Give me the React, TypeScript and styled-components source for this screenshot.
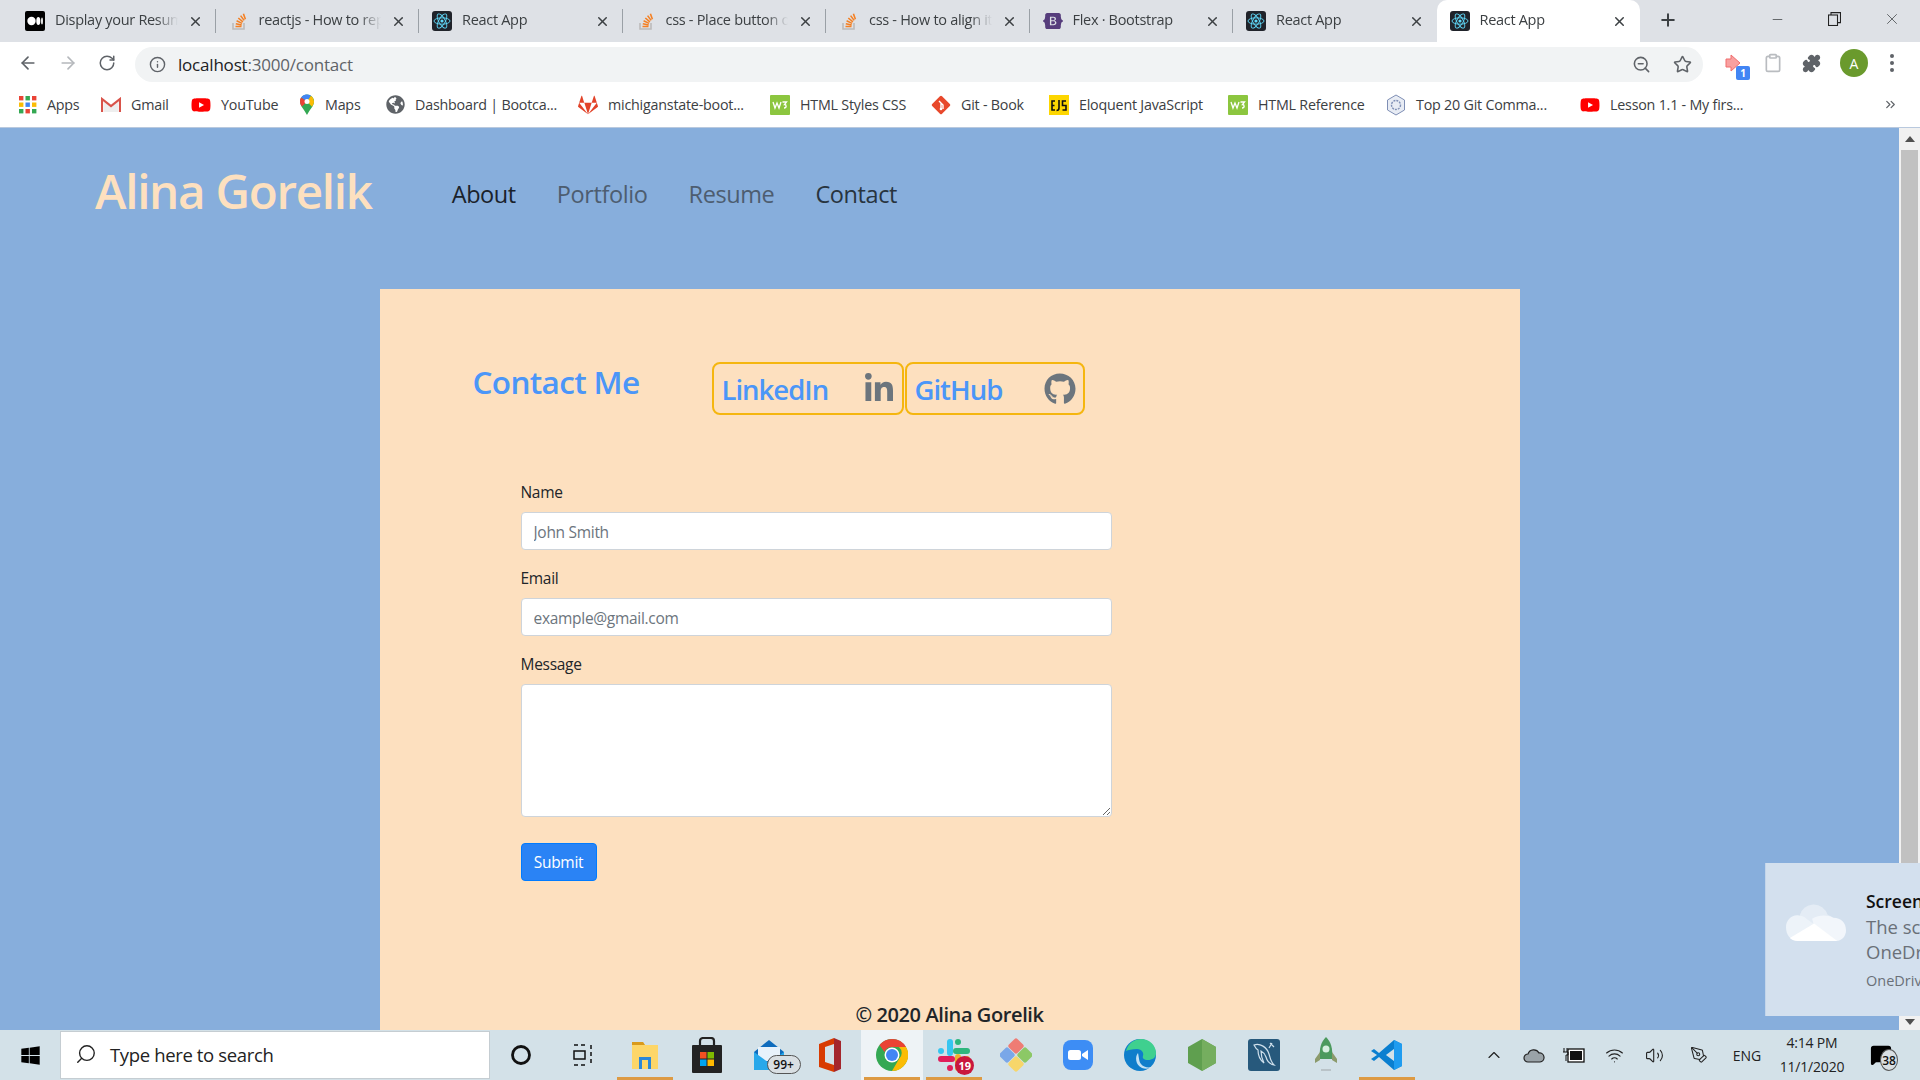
import React from "react";
import styled, { createGlobalStyle } from "styled-components";
import {
  ArrowLeft, ArrowRight, RotateCw, Info, ZoomOut, Star, Puzzle, Plus, X, Minus, Search, ChevronUp,
  Wifi, Volume2, PenTool, MessageSquare, ChevronsRight, Clipboard,
} from "lucide-react";
import { FaLinkedinIn, FaGithub, FaWindows, FaYoutube, FaGitlab, FaGlobeAmericas } from "react-icons/fa";
import { SiBootstrap } from "react-icons/si";

const Global = createGlobalStyle`
  html, body { margin: 0; padding: 0; overflow: hidden; background: #fff; }
  * { box-sizing: border-box; }
  body { font-family: "Open Sans", "Liberation Sans", sans-serif; }
`;

const Screen = styled.div`
  width: 1920px; height: 1080px; display: flex; flex-direction: column; overflow: hidden;
`;
const TabStrip = styled.div`
  height: 42px; background: #dee1e6; display: flex; align-items: flex-end; padding-left: 12px; flex: none;
`;
const Tab = styled.div<{ $active?: boolean; $sep?: boolean }>`
  width: 203.5px; height: ${p => (p.$active ? 42 : 24)}px; margin-bottom: ${p => (p.$active ? 0 : 9)}px;
  display: flex; align-items: center; padding: 0 12px 0 13px;
  background: ${p => (p.$active ? "#fff" : "transparent")};
  border-radius: ${p => (p.$active ? "10px 10px 0 0" : "0")};
  border-right: ${p => (p.$sep ? "1px solid #9aa0a6" : "1px solid transparent")};
  gap: 10px;
`;
const TabTitle = styled.span`
  flex: 1; font-size: 14.5px; line-height: 22px; padding-bottom: 2px; color: #3c4043; white-space: nowrap; overflow: hidden; letter-spacing: -0.3px;
  -webkit-mask-image: linear-gradient(90deg, #000 82%, transparent 100%);
`;
const TabClose = styled(X)`
  flex: none; color: #3c4043;
`;
const NewTab = styled.div`
  width: 56px; height: 42px; display: flex; align-items: center; justify-content: center; color: #3c4043; padding-bottom: 2px;
`;
const WinButtons = styled.div`
  margin-left: auto; display: flex; align-self: stretch; color: #3c4043;
`;
const WinButton = styled.div`
  width: 57px; display: flex; align-items: center; justify-content: center; padding-bottom: 4px;
`;
const Toolbar = styled.div`
  height: 42px; background: #fff; display: flex; align-items: center; flex: none; padding-left: 18px;
`;
const NavIcon = styled.div<{ $faded?: boolean }>`
  width: 40px; display: flex; justify-content: flex-start; color: ${p => (p.$faded ? "#b5b8bc" : "#5f6368")};
`;
const AddressBar = styled.div`
  width: 1568px; margin-left: -3px; height: 35px; border-radius: 18px; background: #f1f3f4;
  display: flex; align-items: center; padding: 0 11px 0 14px; color: #5f6368; margin-top: 3px;
`;
const Url = styled.span`
  font-size: 17px; color: #202124; margin-left: 12px; letter-spacing: -0.2px;
  span { color: #5f6368; }
`;
const AddressRight = styled.div`
  margin-left: auto; display: flex; gap: 22px; align-items: center;
`;
const ExtIcons = styled.div`
  display: flex; align-items: center; margin-left: 21px; gap: 19px;
`;
const ExtBadgeWrap = styled.div`
  position: relative; width: 20px; height: 22px;
`;
const ExtBadge = styled.span`
  position: absolute; right: -6px; bottom: -6px; width: 14px; height: 14px; background: #4285f4; color: #fff;
  font-size: 10px; font-weight: 700; display: flex; align-items: center; justify-content: center; border-radius: 2px;
`;
const Avatar = styled.div`
  width: 28px; height: 28px; border-radius: 50%; background: #6a9a2d; color: #fff; font-size: 14px;
  display: flex; align-items: center; justify-content: center;
`;
const Dots = styled.div`
  display: flex; flex-direction: column; gap: 3px; margin-left: 3px;
  i { width: 4px; height: 4px; border-radius: 50%; background: #5f6368; display: block; }
`;
const Bookmarks = styled.div`
  height: 44px; background: #fff; display: flex; align-items: center; padding: 0 0 2px 19px; flex: none;
  border-bottom: 1px solid #b9c9de;
`;
const Bookmark = styled.div<{ $w: number }>`
  width: ${p => p.$w}px; display: flex; align-items: center; gap: 10px; flex: none; overflow: hidden;
  font-size: 14.3px; color: #3c4043; white-space: nowrap; letter-spacing: -0.22px;
  svg { flex: none; }
`;
const More = styled.div`
  margin-left: auto; margin-right: 22px; color: #5f6368; display: flex;
`;
const Viewport = styled.div`
  flex: 1; min-height: 0; display: flex; position: relative; overflow: hidden;
`;
const Page = styled.main`
  flex: 1; background: #87aedc; display: flex; flex-direction: column; overflow: hidden;
`;
const Header = styled.header`
  height: 161px; flex: none; display: flex; align-items: flex-start; padding: 32px 0 0 95px;
`;
const Brand = styled.a`
  font-size: 47.6px; font-weight: 600; color: #fde0bf; line-height: 62px; letter-spacing: -1.3px; margin-right: 80px;
`;
const NavLinks = styled.nav`
  display: flex; gap: 41px; height: 62px; align-items: center; margin-top: 3px;
`;
const NavLink = styled.a<{ $tone: string }>`
  font-size: 23.5px; color: ${p => p.$tone}; letter-spacing: -0.4px;
`;
const Card = styled.section`
  width: 1140px; margin: 0 auto; flex: 1; background: #fde0bf; padding: 73px 0 0;
  display: flex; flex-direction: column;
`;
const TitleRow = styled.div`
  display: flex; align-items: flex-start; padding-left: 93px; height: 53px; flex: none;
`;
const Title = styled.h1`
  margin: 0; width: 239px; font-size: 31.5px; line-height: 40px; font-weight: 600; color: #4b96f8; letter-spacing: -0.65px;
`;
const SocialButton = styled.a<{ $w: number }>`
  width: ${p => p.$w}px; height: 53px; border: 2px solid #f5b60f; border-radius: 8px; display: flex; align-items: center;
  justify-content: space-between; padding: 2px 7px 0 8px; font-size: 27.5px; font-weight: 600; color: #4b96f8;
  letter-spacing: -1px; margin-right: 1px;
  svg { color: #6c757d; margin-top: -2px; }
`;
const Form = styled.form`
  margin: 65px 0 0 141px; width: 591px; flex: none; display: flex; flex-direction: column;
`;
const Label = styled.label`
  font-size: 15.5px; line-height: 24px; color: #212529; margin-bottom: 8px; display: block; letter-spacing: -0.3px;
`;
const Group = styled.div`
  margin-bottom: 16px; display: flex; flex-direction: column;
`;
const Input = styled.input`
  height: 38px; border: 1px solid #ced4da; border-radius: 4px; background: #fff; padding: 2px 12px 0;
  font: 15.5px "Open Sans", sans-serif; letter-spacing: -0.3px; outline: none;
  &::placeholder { color: #6c757d; opacity: 1; }
`;
const TextArea = styled.textarea`
  height: 133px; border: 1px solid #ced4da; border-radius: 4px; background: #fff; outline: none; display: block;
`;
const Submit = styled.button`
  width: 76px; height: 38px; margin-top: 10px; border: 1px solid #007bff; border-radius: 4px; background: #2a83f5; color: #fff;
  font: 15.5px "Open Sans", sans-serif; letter-spacing: -0.3px; padding: 0;
`;
const Footer = styled.footer`
  margin-top: 119px; text-align: center; font-size: 20px; line-height: 30px; font-weight: 600; color: #212529; letter-spacing: -0.4px;
`;
const Scrollbar = styled.div`
  width: 21px; flex: none; background: #f1f1f1; display: flex; flex-direction: column; align-items: center; padding-top: 8px;
`;
const ScrollUp = styled.i`
  width: 0; height: 0; border: 5px solid transparent; border-bottom: 6px solid #505050; border-top: 0; display: block;
`;
const ScrollThumb = styled.div`
  width: 17px; height: 720px; background: #c1c1c1; margin-top: 8px;
`;
const ScrollDown = styled.i`
  margin-top: auto; margin-bottom: 5px; width: 0; height: 0; border: 5px solid transparent; border-top: 6px solid #505050; border-bottom: 0; display: block;
`;
const Toast = styled.aside`
  position: absolute; left: 1765px; top: 735px; width: 155px; height: 153px; background: #d3e0ee;
  display: flex; padding: 26px 0 0 20px; overflow: hidden; white-space: nowrap; border-left: 1px solid #c3d5ea;
`;
const ToastCloud = styled.div`
  flex: none; width: 60px; height: 40px; margin-top: 14px; display: flex;
`;
const ToastText = styled.div`
  margin-left: 20px; flex: none; display: flex; flex-direction: column; font-size: 18.5px; line-height: 25px; color: #6a7078;
  strong { color: #111; font-size: 17.5px; font-weight: 600; }
  small { font-size: 14.500px; margin-top: 5px; line-height: 24px; }
`;
const Taskbar = styled.footer`
  height: 50px; flex: none; background: #d3e1e8; display: flex; align-items: center; position: relative;
`;
const StartBtn = styled.div`
  width: 60px; display: flex; align-items: center; justify-content: center; color: #000;
`;
const SearchBox = styled.div`
  width: 430px; height: 48px; background: #fff; border: 1px solid #c5cdd2; display: flex; align-items: center; padding: 0 0 2px 14px;
  font-size: 18.5px; color: #222; gap: 13px; letter-spacing: -0.36px;
`;
const TaskItem = styled.div<{ $on?: boolean; $bar?: boolean }>`
  width: 61.9px; height: 50px; flex: none; display: flex; align-items: center; justify-content: center; position: relative;
  background: ${p => (p.$on ? "#eef3f6" : "transparent")};
  &::after {
    content: ""; position: absolute; left: 3px; right: 3px; bottom: 0; height: 3px;
    background: ${p => (p.$bar ? "#dd9a43" : "transparent")};
  }
`;
const Count = styled.span`
  position: absolute; left: 29px; bottom: 6px; min-width: 34px; height: 19px; border-radius: 10px; background: #d9dfe3;
  border: 1px solid #555; font-size: 12px; font-weight: 600; color: #111; display: flex; align-items: center; justify-content: center;
`;
const RedBadge = styled.span`
  position: absolute; left: 32px; bottom: 5px; width: 19px; height: 19px; border-radius: 50%; background: #c9173d; color: #fff;
  font-size: 11px; font-weight: 700; display: flex; align-items: center; justify-content: center;
`;
const Tray = styled.div`
  margin-left: auto; display: flex; align-items: center; height: 50px; color: #222; padding-right: 10px;
`;
const TrayIcon = styled.div<{ $w?: number }>`
  width: ${p => p.$w ?? 40}px; display: flex; justify-content: center; align-items: center; font-size: 14px;
`;
const Clock = styled.div`
  width: 84px; display: flex; flex-direction: column; align-items: center; font-size: 14px; line-height: 24px; color: #222; letter-spacing: -0.2px;
`;
const NotifWrap = styled.div`
  position: relative; margin-left: 16px; width: 40px; display: flex; justify-content: flex-start; align-items: center;
`;
const NotifCount = styled.span`
  position: absolute; left: 10px; top: 5px; width: 18px; height: 22px; border-radius: 50%; background: #d9dfe3;
  border: 1px solid #555; font-size: 12px; font-weight: 600; color: #111; display: flex; align-items: center; justify-content: center;
`;

const Medium = () => (
  <svg width="20" height="20" viewBox="0 0 20 20"><rect width="20" height="20" rx="2" fill="#000"/><circle cx="6.5" cy="10" r="4.2" fill="#fff"/><ellipse cx="13.3" cy="10" rx="2" ry="4" fill="#fff"/><ellipse cx="17" cy="10" rx=".9" ry="3.6" fill="#fff"/></svg>
);
const StackO = () => (
  <svg width="20" height="20" viewBox="0 0 20 20"><path d="M4 12v6h11v-6" fill="none" stroke="#bcbbbb" strokeWidth="1.6"/><path d="M6.5 15.5h6M6.8 12.8l5.9 1.2M7.6 9.8l5.5 2.6M9.3 7l4.6 3.9M11.6 4.6l3.5 4.8M14.4 2.8l2 5.5" stroke="#f48024" strokeWidth="1.6" fill="none"/></svg>
);
const ReactFav = () => (
  <svg width="20" height="20" viewBox="0 0 20 20"><rect width="20" height="20" rx="3" fill="#20232a"/><g fill="none" stroke="#61dafb" strokeWidth=".9"><ellipse cx="10" cy="10" rx="8" ry="3.2"/><ellipse cx="10" cy="10" rx="8" ry="3.2" transform="rotate(60 10 10)"/><ellipse cx="10" cy="10" rx="8" ry="3.2" transform="rotate(120 10 10)"/></g><circle cx="10" cy="10" r="1.6" fill="#61dafb"/></svg>
);
const RestoreIcon = () => (
  <svg width="13" height="14" viewBox="0 0 13 14" fill="none" stroke="#222" strokeWidth="1.1"><rect x=".5" y="3" width="9" height="10.500"/><path d="M3 3V.6h9.500v10H9.500"/></svg>
);
const AppsGrid = () => (
  <svg width="18" height="18" viewBox="0 0 18 18">
    {[0, 1, 2].flatMap(r => [0, 1, 2].map(c => (
      <rect key={`${r}${c}`} x={c * 6.5} y={r * 6.5} width="4.4" height="4.4" fill={["#ea4335", "#fbbc05", "#34a853", "#4285f4"][(r + c * 2) % 4]} />
    )))}
  </svg>
);
const GmailIcon = () => (
  <svg width="20" height="16" viewBox="0 0 20 16"><path d="M3 3l7 6 7-6v12H3z" fill="#eee"/><path d="M1 15V2l9 7 9-7v13" fill="none" stroke="#d9534a" strokeWidth="2.2"/></svg>
);
const MapsIcon = () => (
  <svg width="16" height="22" viewBox="0 0 16 22"><path d="M8 21C5 15 1 12 1 7.500a7 7 0 0 1 14 0C15 12 11 15 8 21z" fill="#34a853"/><path d="M2 3.500A7 7 0 0 1 12 1.800L8 7.500z" fill="#4285f4"/><path d="M12 1.800A7 7 0 0 1 15 7.500c0 2-1 3.800-2 5.300L8 7.500z" fill="#fbbc05"/><path d="M2 3.500L8 7.500 3 12.500C1.800 11 1 9.500 1 7.500c0-1.500.4-2.900 1-4z" fill="#ea4335"/><circle cx="8" cy="7.500" r="2.500" fill="#fff"/></svg>
);
const W3Icon = () => (
  <svg width="20" height="20" viewBox="0 0 20 20"><rect width="20" height="20" rx="1" fill="#8cc63f"/><path d="M3 7l2 6 2-5 2 5 2-6M12.500 7h4l-2 2.500c2 0 2.500 3.500-.5 3.500" fill="none" stroke="#fff" strokeWidth="1.300"/></svg>
);
const GitIcon = () => (
  <svg width="20" height="20" viewBox="0 0 20 20"><rect x="3" y="3" width="14" height="14" rx="1.500" transform="rotate(45 10 10)" fill="#e8482b"/><path d="M8 6l4 4v4M10 8v6" stroke="#fff" strokeWidth="1.400" fill="none"/><circle cx="10" cy="14" r="1.300" fill="#fff"/></svg>
);
const EjsIcon = () => (
  <svg width="20" height="20" viewBox="0 0 20 20"><rect width="20" height="20" fill="#fdd600"/><path d="M6 6H3v9h3M3 10.500h2.500M10 5v8c0 2-1 2.500-2.500 2.500M17 6h-3.500v4.500H17V15h-3.500" fill="none" stroke="#111" strokeWidth="1.600"/></svg>
);
const HexIcon = () => (
  <svg width="20" height="22" viewBox="0 0 20 22"><path d="M10 1l8.500 5v10L10 21l-8.500-5V6z" fill="#e8ecf4" stroke="#7f8fb5" strokeWidth="1"/><circle cx="10" cy="11" r="4.500" fill="none" stroke="#7f8fb5" strokeWidth="1.400" strokeDasharray="2 1"/></svg>
);
const ExtArrow = () => (
  <svg width="20" height="22" viewBox="0 0 20 22"><path d="M2 7h5V3l9 8-9 8v-4H2z" fill="#f8a0a0" stroke="#f06c6c" strokeWidth="1"/></svg>
);
const CloudToast = () => (
  <svg width="60" height="39" viewBox="0 0 62 40"><path d="M14 13a15 15 0 0 1 29-1 12 12 0 0 1 6 4L22 25z" fill="#e4ecf5"/><path d="M0 25c0-8 7-14 14-12 3 0 6 1.500 8 4l9 6-19 16C5 39 0 33 0 25z" fill="#edf3f9"/><path d="M27 16c7-4 16-4 22-1 8 0 13 5 13 13 0 6-4 11-10 11l-22-12z" fill="#f2f6fb"/><path d="M4 36l25-15 24 18H12c-3 0-6-1-8-3z" fill="#fff"/></svg>
);
const WinExplorer = () => (
  <svg width="26" height="30" viewBox="0 0 26 30"><path d="M0 2h11l2 3h13v24H0z" fill="#fdd668"/><path d="M0 2h11l2 3H0z" fill="#d99a1c"/><path d="M7 17h12v12h-3v-9h-6v9H7z" fill="#2b87d8"/></svg>
);
const StoreIcon = () => (
  <svg width="30" height="36" viewBox="0 0 30 36"><path d="M8 9V4a3 3 0 0 1 3-3h8a3 3 0 0 1 3 3v5" fill="none" stroke="#222" strokeWidth="2.200"/><rect y="8" width="30" height="28" rx="1" fill="#232323"/><rect x="8" y="15" width="6.500" height="6.500" fill="#f25022"/><rect x="15.500" y="15" width="6.500" height="6.500" fill="#7fba00"/><rect x="8" y="22.500" width="6.500" height="6.500" fill="#00a4ef"/><rect x="15.500" y="22.500" width="6.500" height="6.500" fill="#ffb900"/></svg>
);
const MailIcon = () => (
  <svg width="32" height="32" viewBox="0 0 32 32"><path d="M1 13L16 1l15 12v18H1z" fill="#0f6cbd"/><path d="M5 8h22v14H5z" fill="#e8f2fb"/><path d="M1 13l15 11 15-11v18H1z" fill="#28a8ea"/></svg>
);
const OfficeIcon = () => (
  <svg width="24" height="34" viewBox="0 0 24 34"><path d="M1 6L16 0v6L7 9v15l9 3v7L1 29z" fill="#d83b01"/><path d="M16 0l7 3v28l-7 3z" fill="#a4262c"/></svg>
);
const ChromeIcon = () => (
  <svg width="32" height="32" viewBox="0 0 32 32"><circle cx="16" cy="16" r="16" fill="#34a853"/><path d="M16 0a16 16 0 0 1 14 8H16a8 8 0 0 0-7.500 5L3.500 6A16 16 0 0 1 16 0z" fill="#ea4335"/><path d="M30 8a16 16 0 0 1-14 24l7-12a8 8 0 0 0 0-12z" fill="#fbbc05"/><circle cx="16" cy="16" r="7.500" fill="#fff"/><circle cx="16" cy="16" r="6" fill="#4285f4"/></svg>
);
const SlackIcon = () => (
  <svg width="32" height="32" viewBox="0 0 32 32"><g strokeWidth="6" strokeLinecap="round"><path d="M12 3v11M3 12h0" stroke="#36c5f0"/><path d="M29 12H18M20 3h0" stroke="#2eb67d"/><path d="M20 29V18M29 20h0" stroke="#ecb22e"/><path d="M3 20h11M12 29h0" stroke="#e01e5a"/></g></svg>
);
const GemIcon = () => (
  <svg width="32" height="34" viewBox="0 0 32 34"><rect x="10" y="2" width="12" height="12" rx="2" transform="rotate(45 16 8)" fill="#ef7c74"/><rect x="1" y="11" width="12" height="12" rx="2" transform="rotate(45 7 17)" fill="#7aa7e8"/><rect x="19" y="11" width="12" height="12" rx="2" transform="rotate(45 25 17)" fill="#8cc866"/><rect x="10" y="20" width="12" height="12" rx="2" transform="rotate(45 16 26)" fill="#f7d66a"/></svg>
);
const ZoomIcon = () => (
  <svg width="30" height="30" viewBox="0 0 30 30"><rect width="30" height="30" rx="8" fill="#3d8df5"/><rect x="5" y="10" width="13" height="10" rx="2.500" fill="#fff"/><path d="M19 14l6-4v10l-6-4z" fill="#fff"/></svg>
);
const EdgeIcon = () => (
  <svg width="32" height="32" viewBox="0 0 32 32"><circle cx="16" cy="16" r="16" fill="#0f7ecb"/><path d="M2 12C4 4 11 0 17 0c8 0 15 6 15 14 0 5-4 7-8 7-4 0-6-2-5-4 1-3-1-7-6-7-5 0-9 1-11 2z" fill="#3fd08f"/><path d="M14 14c-3 3-3 12 4 15 3 1 7 1 10-1-4 1-9 0-11-3-2-2-2-7-3-11z" fill="#d6ecf8" fillOpacity=".9"/></svg>
);
const MongoHex = () => (
  <svg width="28" height="32" viewBox="0 0 28 32"><path d="M14 0l14 8v16l-14 8-14-8V8z" fill="#5f9f4f"/><path d="M14 0l14 8v16l-14 8z" fill="#75ae5f"/></svg>
);
const MysqlIcon = () => (
  <svg width="32" height="32" viewBox="0 0 32 32"><rect width="32" height="32" rx="3" fill="#27597c"/><path d="M6 6c6-2 13 2 15 9 1 4 2 8 5 11-4-1-7-4-8-8-1-3-3-5-5-6 0 4 1 8 3 12-4-3-6-8-6-13-2-1-3-3-4-5zM22 4l4 4M24 4l-3 5" fill="none" stroke="#cfe0ec" strokeWidth="1.200"/></svg>
);
const RocketIcon = () => (
  <svg width="26" height="36" viewBox="0 0 26 36"><path d="M13 0c5 5 7 11 6 22H7C6 11 8 5 13 0z" fill="#4c9a5e"/><circle cx="13" cy="12" r="3.500" fill="#d6efe0"/><path d="M7 15l-5 7v4l5-3zM19 15l5 7v4l-5-3z" fill="#8b9a6b"/><rect x="8" y="32" width="10" height="2" fill="#b9c3c8"/></svg>
);
const VsCodeIcon = () => (
  <svg width="32" height="32" viewBox="0 0 32 32"><path d="M23 1l8 4v22l-8 4L8 18l-5 4-3-2 6-4-6-4 3-2 5 4z" fill="#0a7fd0"/><path d="M23 1l8 4v22l-8 4V22l-8-6 8-6z" fill="#1f9cf0"/><path d="M23 10l-8 6 8 6z" fill="#d3e1e8"/></svg>
);
const CortanaIcon = () => (
  <svg width="22" height="22" viewBox="0 0 22 22"><circle cx="11" cy="11" r="8.500" fill="none" stroke="#111" strokeWidth="2.800"/></svg>
);
const TaskView = () => (
  <svg width="20" height="22" viewBox="0 0 20 22" fill="none" stroke="#111" strokeWidth="1.500"><path d="M1 1h12M1 21h12M18 1v20" strokeDasharray="4 3"/><rect x="1" y="7" width="11" height="8"/></svg>
);
const TrayCloud = () => (
  <svg width="22" height="16" viewBox="0 0 22 16"><path d="M5 15a4 4 0 0 1 0-8 6 6 0 0 1 11-1 4.500 4.500 0 0 1 1 9z" fill="#9aa3a8" stroke="#222" strokeWidth="1.200"/></svg>
);
const Battery = () => (
  <svg width="22" height="16" viewBox="0 0 22 16"><rect x="5" y="2" width="16" height="13" fill="#fff" stroke="#111" strokeWidth="1.300"/><rect x="7" y="4" width="12" height="9" fill="#111"/><path d="M1 1v4M4 1v4M0 5h5v3H3v6" stroke="#111" fill="none"/></svg>
);

const tabs = [
  { t: "Display your Resume on your", i: <Medium /> },
  { t: "reactjs - How to replace", i: <StackO /> },
  { t: "React App", i: <ReactFav /> },
  { t: "css - Place button on the", i: <StackO /> },
  { t: "css - How to align items", i: <StackO /> },
  { t: "Flex · Bootstrap", i: <SiBootstrap size={20} color="#563d7c" /> },
  { t: "React App", i: <ReactFav /> },
];
const marks: [string, number, React.ReactNode][] = [
  ["Apps", 82, <AppsGrid />],
  ["Gmail", 90, <GmailIcon />],
  ["YouTube", 108, <FaYoutube size={20} color="#f00" />],
  ["Maps", 87, <MapsIcon />],
  ["Dashboard | Bootca...", 192, <FaGlobeAmericas size={19} color="#5f6368" />],
  ["michiganstate-boot...", 192, <FaGitlab size={20} color="#e24329" />],
  ["HTML Styles CSS", 161, <W3Icon />],
  ["Git - Book", 118, <GitIcon />],
  ["Eloquent JavaScript", 179, <EjsIcon />],
  ["HTML Reference", 158, <W3Icon />],
  ["Top 20 Git Comma...", 194, <HexIcon />],
  ["Lesson 1.1 - My firs...", 170, <FaYoutube size={20} color="#f00" />],
];

export default function App() {
  return (
    <Screen>
      <Global />
      <TabStrip>
        {tabs.map((x, i) => (
          <Tab key={i} $sep={i < 6}>
            {x.i}
            <TabTitle>{x.t}</TabTitle>
            <TabClose size={15} strokeWidth={2.4} />
          </Tab>
        ))}
        <Tab $active>
          <ReactFav />
          <TabTitle>React App</TabTitle>
          <TabClose size={15} strokeWidth={2.4} />
        </Tab>
        <NewTab><Plus size={20} strokeWidth={2.4} /></NewTab>
        <WinButtons>
          <WinButton><Minus size={15} strokeWidth={1.2} /></WinButton>
          <WinButton><RestoreIcon /></WinButton>
          <WinButton><X size={18} strokeWidth={1} /></WinButton>
        </WinButtons>
      </TabStrip>
      <Toolbar>
        <NavIcon><ArrowLeft size={20} /></NavIcon>
        <NavIcon $faded><ArrowRight size={20} /></NavIcon>
        <NavIcon><RotateCw size={18} /></NavIcon>
        <AddressBar>
          <Info size={17} />
          <Url>localhost<span>:3000/contact</span></Url>
          <AddressRight>
            <ZoomOut size={19} />
            <Star size={19} />
          </AddressRight>
        </AddressBar>
        <ExtIcons>
          <ExtBadgeWrap><ExtArrow /><ExtBadge>1</ExtBadge></ExtBadgeWrap>
          <Clipboard size={20} color="#b9bcc0" />
          <Puzzle size={19} color="#5f6368" fill="#5f6368" />
          <Avatar>A</Avatar>
          <Dots><i /><i /><i /></Dots>
        </ExtIcons>
      </Toolbar>
      <Bookmarks>
        {marks.map(([t, w, ic]) => (
          <Bookmark key={t} $w={w}>{ic}<span>{t}</span></Bookmark>
        ))}
        <More><ChevronsRight size={15} /></More>
      </Bookmarks>
      <Viewport>
        <Page>
          <Header>
            <Brand>Alina Gorelik</Brand>
            <NavLinks>
              <NavLink $tone="#1a222b">About</NavLink>
              <NavLink $tone="#4d5d70">Portfolio</NavLink>
              <NavLink $tone="#4d5d70">Resume</NavLink>
              <NavLink $tone="#28343f">Contact</NavLink>
            </NavLinks>
          </Header>
          <Card>
            <TitleRow>
              <Title>Contact Me</Title>
              <SocialButton $w={192}>LinkedIn<FaLinkedinIn size={32} /></SocialButton>
              <SocialButton $w={180}>GitHub<FaGithub size={32} /></SocialButton>
            </TitleRow>
            <Form>
              <Group><Label>Name</Label><Input placeholder="John Smith" /></Group>
              <Group><Label>Email</Label><Input placeholder="example@gmail.com" /></Group>
              <Group><Label>Message</Label><TextArea /></Group>
              <Submit type="button">Submit</Submit>
            </Form>
            <Footer>© 2020 Alina Gorelik</Footer>
          </Card>
        </Page>
        <Scrollbar><ScrollUp /><ScrollThumb /><ScrollDown /></Scrollbar>
        <Toast>
          <ToastCloud><CloudToast /></ToastCloud>
          <ToastText>
            <strong>Screenshot saved</strong>
            <span>The screenshot was added to</span>
            <span>OneDrive</span>
            <small>OneDrive</small>
          </ToastText>
        </Toast>
      </Viewport>
      <Taskbar>
        <StartBtn><FaWindows size={21} /></StartBtn>
        <SearchBox><Search size={22} strokeWidth={1.5} style={{ transform: "scaleX(-1)" }} />Type here to search</SearchBox>
        <TaskItem><CortanaIcon /></TaskItem>
        <TaskItem><TaskView /></TaskItem>
        <TaskItem $bar><WinExplorer /></TaskItem>
        <TaskItem><StoreIcon /></TaskItem>
        <TaskItem><MailIcon /><Count>99+</Count></TaskItem>
        <TaskItem><OfficeIcon /></TaskItem>
        <TaskItem $on $bar><ChromeIcon /></TaskItem>
        <TaskItem $bar><SlackIcon /><RedBadge>19</RedBadge></TaskItem>
        <TaskItem><GemIcon /></TaskItem>
        <TaskItem><ZoomIcon /></TaskItem>
        <TaskItem><EdgeIcon /></TaskItem>
        <TaskItem><MongoHex /></TaskItem>
        <TaskItem><MysqlIcon /></TaskItem>
        <TaskItem><RocketIcon /></TaskItem>
        <TaskItem $bar><VsCodeIcon /></TaskItem>
        <Tray>
          <TrayIcon><ChevronUp size={20} strokeWidth={1.4} /></TrayIcon>
          <TrayIcon><TrayCloud /></TrayIcon>
          <TrayIcon><Battery /></TrayIcon>
          <TrayIcon><Wifi size={19} strokeWidth={1.4} /></TrayIcon>
          <TrayIcon><Volume2 size={19} strokeWidth={1.4} /></TrayIcon>
          <TrayIcon $w={50}><PenTool size={18} strokeWidth={1.4} /></TrayIcon>
          <TrayIcon $w={46}>ENG</TrayIcon>
          <Clock><span>4:14 PM</span><span>11/1/2020</span></Clock>
          <NotifWrap><MessageSquare size={22} fill="#000" color="#000" /><NotifCount>38</NotifCount></NotifWrap>
        </Tray>
      </Taskbar>
    </Screen>
  );
}
